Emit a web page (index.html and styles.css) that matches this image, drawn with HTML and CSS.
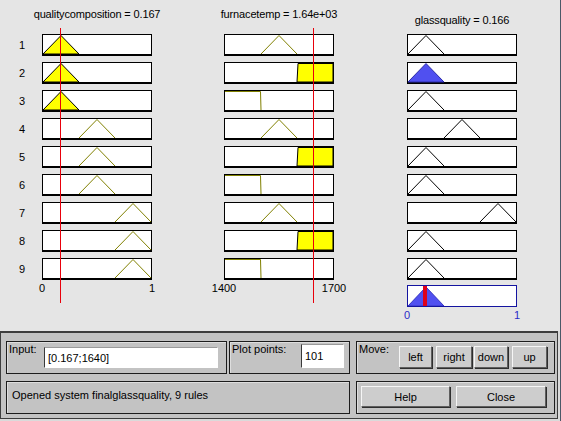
FILE: index.html
```html
<!DOCTYPE html>
<html>
<head>
<meta charset="utf-8">
<title>Rule Viewer: finalglassquality</title>
<link rel="stylesheet" href="styles.css">
</head>
<body>
<div class="window">
  <div class="figure">
    <div class="rownums">
      <div class="rownum">1</div>
      <div class="rownum">2</div>
      <div class="rownum">3</div>
      <div class="rownum">4</div>
      <div class="rownum">5</div>
      <div class="rownum">6</div>
      <div class="rownum">7</div>
      <div class="rownum">8</div>
      <div class="rownum">9</div>
    </div>

    <div class="col c1">
      <div class="title"><span>qualitycomposition = 0.167</span></div>
      <div class="rules">
        <div class="box"><svg viewBox="0 0 108 19"><polygon class="in-fill" points="0,19 18,0.5 36,19"/></svg></div>
        <div class="box"><svg viewBox="0 0 108 19"><polygon class="in-fill" points="0,19 18,0.5 36,19"/></svg></div>
        <div class="box"><svg viewBox="0 0 108 19"><polygon class="in-fill" points="0,19 18,0.5 36,19"/></svg></div>
        <div class="box"><svg viewBox="0 0 108 19"><polyline class="in-line" points="36,19 54,0.5 72,19"/></svg></div>
        <div class="box"><svg viewBox="0 0 108 19"><polyline class="in-line" points="36,19 54,0.5 72,19"/></svg></div>
        <div class="box"><svg viewBox="0 0 108 19"><polyline class="in-line" points="36,19 54,0.5 72,19"/></svg></div>
        <div class="box"><svg viewBox="0 0 108 19"><polyline class="in-line" points="72,19 90,0.5 108,19"/></svg></div>
        <div class="box"><svg viewBox="0 0 108 19"><polyline class="in-line" points="72,19 90,0.5 108,19"/></svg></div>
        <div class="box"><svg viewBox="0 0 108 19"><polyline class="in-line" points="72,19 90,0.5 108,19"/></svg></div>
      </div>
      <div class="axis"><span>0</span><span>1</span></div>
      <div class="redline"></div>
    </div>

    <div class="col c2">
      <div class="title"><span>furnacetemp = 1.64e+03</span></div>
      <div class="rules">
        <div class="box"><svg viewBox="0 0 108 19"><polyline class="in-line" points="36,19 54,0.5 72,19"/></svg></div>
        <div class="box"><svg viewBox="0 0 108 19"><polygon class="in-fill" points="72,19 73,0.5 108,0.5 108,19"/></svg></div>
        <div class="box"><svg viewBox="0 0 108 19"><polyline class="in-line" points="0,0.5 35.5,0.5 36,19"/></svg></div>
        <div class="box"><svg viewBox="0 0 108 19"><polyline class="in-line" points="36,19 54,0.5 72,19"/></svg></div>
        <div class="box"><svg viewBox="0 0 108 19"><polygon class="in-fill" points="72,19 73,0.5 108,0.5 108,19"/></svg></div>
        <div class="box"><svg viewBox="0 0 108 19"><polyline class="in-line" points="0,0.5 35.5,0.5 36,19"/></svg></div>
        <div class="box"><svg viewBox="0 0 108 19"><polyline class="in-line" points="36,19 54,0.5 72,19"/></svg></div>
        <div class="box"><svg viewBox="0 0 108 19"><polygon class="in-fill" points="72,19 73,0.5 108,0.5 108,19"/></svg></div>
        <div class="box"><svg viewBox="0 0 108 19"><polyline class="in-line" points="0,0.5 35.5,0.5 36,19"/></svg></div>
      </div>
      <div class="axis"><span>1400</span><span>1700</span></div>
      <div class="redline"></div>
    </div>

    <div class="col c3">
      <div class="title"><span>glassquality = 0.166</span></div>
      <div class="rules">
        <div class="box"><svg viewBox="0 0 108 19"><polyline class="out-line" points="0,19 18,0.5 36,19"/></svg></div>
        <div class="box"><svg viewBox="0 0 108 19"><polygon class="out-fill" points="0,19 18,0.5 36,19"/></svg></div>
        <div class="box"><svg viewBox="0 0 108 19"><polyline class="out-line" points="0,19 18,0.5 36,19"/></svg></div>
        <div class="box"><svg viewBox="0 0 108 19"><polyline class="out-line" points="36,19 54,0.5 72,19"/></svg></div>
        <div class="box"><svg viewBox="0 0 108 19"><polyline class="out-line" points="0,19 18,0.5 36,19"/></svg></div>
        <div class="box"><svg viewBox="0 0 108 19"><polyline class="out-line" points="0,19 18,0.5 36,19"/></svg></div>
        <div class="box"><svg viewBox="0 0 108 19"><polyline class="out-line" points="72,19 90,0.5 108,19"/></svg></div>
        <div class="box"><svg viewBox="0 0 108 19"><polyline class="out-line" points="0,19 18,0.5 36,19"/></svg></div>
        <div class="box"><svg viewBox="0 0 108 19"><polyline class="out-line" points="0,19 18,0.5 36,19"/></svg></div>
      </div>
      <div class="agg"><svg viewBox="0 0 108 20"><polygon class="agg-fill" points="0,20 18,1 36,20"/><rect class="agg-mark" x="15" y="0" width="4" height="20"/></svg></div>
      <div class="axis"><span>0</span><span>1</span></div>
    </div>
  </div>

  <div class="panel">
    <div class="prow">
      <div class="pane input-pane">
        <span class="lbl lbl-input">Input:</span>
        <div class="field field-input">[0.167;1640]</div>
      </div>
      <div class="pane plot-pane">
        <span class="lbl lbl-plot">Plot points:</span>
        <div class="field field-plot">101</div>
      </div>
      <div class="pane move-pane">
        <span class="lbl lbl-move">Move:</span>
        <div class="btn b-left">left</div>
        <div class="btn b-right">right</div>
        <div class="btn b-down">down</div>
        <div class="btn b-up">up</div>
      </div>
    </div>
    <div class="prow">
      <div class="pane status-pane">Opened system finalglassquality, 9 rules</div>
      <div class="pane action-pane">
        <div class="btn b-help">Help</div>
        <div class="btn b-close">Close</div>
      </div>
    </div>
  </div>
</div>
</body>
</html>
```
FILE: styles.css
```css
* { box-sizing: border-box; }
html, body { margin: 0; padding: 0; }
body {
  width: 561px;
  height: 421px;
  overflow: hidden;
  font-family: "Liberation Sans", Arial, sans-serif;
  font-size: 11px;
  color: #000;
  background: #e5e5e5;
}
.window {
  width: 561px;
  height: 421px;
  border-right: 1px solid #4b5867;
  background: #dadada;
  display: flex;
  flex-direction: column;
}
.figure {
  height: 331px;
  flex: none;
  display: flex;
  align-items: flex-start;
  background: #e5e5e5;
}
.rownums {
  width: 42px;
  padding-top: 34px;
  padding-left: 2px;
}
.rownum {
  height: 22px;
  line-height: 22px;
  margin-bottom: 6px;
  text-align: center;
}
.col {
  position: relative;
  width: 110px;
}
.c2 { margin-left: 72px; }
.c3 { margin-left: 73px; }
.title {
  height: 34px;
  padding-top: 8px;
  display: flex;
  justify-content: center;
  white-space: nowrap;
  line-height: 13px;
  letter-spacing: -0.15px;
}
.c3 .title { padding-top: 14px; }
.rules {
  display: flex;
  flex-direction: column;
  gap: 6px;
}
.box {
  height: 22px;
  background: #fff;
  border: 1px solid #000;
  border-bottom-width: 2px;
}
.box svg {
  display: block;
  width: 108px;
  height: 19px;
  overflow: visible;
}
.in-fill { fill: #ffff00; stroke: #000; stroke-width: 1; }
.in-line { fill: none; stroke: #808000; stroke-width: 1; }
.out-line { fill: none; stroke: #000; stroke-width: 1; }
.out-fill { fill: #5050f0; stroke: #2a2aa8; stroke-width: 1; }
.agg {
  margin-top: 5px;
  height: 22px;
  background: #fff;
  border: 1px solid #1414a0;
}
.agg svg {
  display: block;
  width: 108px;
  height: 20px;
}
.agg-fill { fill: #5050f0; stroke: #3535c0; stroke-width: 1; }
.agg-mark { fill: #e0001a; }
.axis {
  display: flex;
  justify-content: space-between;
  margin-top: 2px;
  line-height: 13px;
}
.axis span {
  width: 0;
  display: flex;
  justify-content: center;
  white-space: nowrap;
}
.c3 .axis { color: #2a2ac8; }
.redline {
  position: absolute;
  top: 28px;
  height: 275px;
  width: 1px;
  background: #e8000b;
}
.c1 .redline { left: 18px; }
.c2 .redline { left: 89px; }

/* control panel */
.panel {
  flex: none;
  height: 88px;
  margin-right: 2px;
  background: #c3c3c3;
  border-top: 2px solid #3d3d3d;
  border-left: 1px solid #3d3d3d;
  border-right: 1px solid #3d3d3d;
  border-bottom: 1px solid #3d3d3d;
  padding: 8px 0 0 5px;
  display: flex;
  flex-direction: column;
  gap: 7px;
}
.prow {
  display: flex;
  align-items: flex-start;
}
.pane {
  height: 33px;
  background: #c3c3c3;
  border: 1px solid #1c1c1c;
  box-shadow: inset 1px 1px 0 #dedede;
  display: flex;
  align-items: flex-start;
}
.input-pane { width: 221px; padding-left: 2px; }
.plot-pane { width: 121px; margin-left: 2px; padding-left: 2px; }
.move-pane { width: 199px; margin-left: 6px; padding-left: 2px; }
.status-pane { width: 344px; padding: 7px 0 0 5px; line-height: 13px; }
.action-pane { width: 199px; margin-left: 6px; padding-left: 4px; }
.lbl { line-height: 13px; padding-top: 1px; }
.lbl-input { width: 35px; }
.lbl-plot { width: 69px; }
.lbl-move { width: 40px; }
.field {
  background: #fff;
  border: 1px solid;
  border-color: #9a9a9a #ffffff #ffffff #3a3a3a;
  padding-left: 3px;
  display: flex;
  align-items: center;
}
.field-input { width: 174px; height: 21px; margin-top: 5px; }
.field-plot { width: 43px; height: 24px; margin-top: 2px; }
.btn {
  height: 22px;
  margin-top: 4px;
  background: #cdcdcd;
  border: 1px solid;
  border-color: #f6f6f6 #5e5e5e #5e5e5e #f6f6f6;
  box-shadow: 1px 1px 0 #2e2e2e;
  display: flex;
  align-items: center;
  justify-content: center;
}
.b-left { width: 33px; }
.b-right { width: 36px; margin-left: 4px; }
.b-down { width: 34px; margin-left: 2px; }
.b-up { width: 35px; margin-left: 4px; }
.b-help { width: 89px; height: 21px; }
.b-close { width: 90px; height: 21px; margin-left: 6px; }
```
